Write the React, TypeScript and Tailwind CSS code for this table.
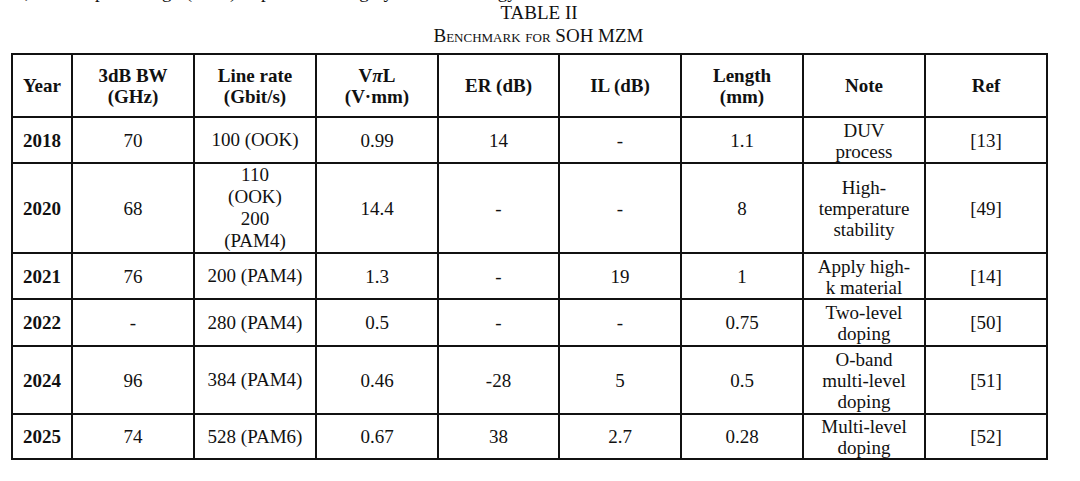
const rows = [
  { year: "2018", bw: "70", rate: ["100 (OOK)"], vpl: "0.99", er: "14", il: "-", len: "1.1", note: ["DUV", "process"], ref: "[13]", h: "h-[46px]" },
  { year: "2020", bw: "68", rate: ["110", "(OOK)", "200", "(PAM4)"], vpl: "14.4", er: "-", il: "-", len: "8", note: ["High-", "temperature", "stability"], ref: "[49]", h: "h-[90px]" },
  { year: "2021", bw: "76", rate: ["200 (PAM4)"], vpl: "1.3", er: "-", il: "19", len: "1", note: ["Apply high-", "k material"], ref: "[14]", h: "h-[46px]" },
  { year: "2022", bw: "-", rate: ["280 (PAM4)"], vpl: "0.5", er: "-", il: "-", len: "0.75", note: ["Two-level", "doping"], ref: "[50]", h: "h-[47px]" },
  { year: "2024", bw: "96", rate: ["384 (PAM4)"], vpl: "0.46", er: "-28", il: "5", len: "0.5", note: ["O-band", "multi-level", "doping"], ref: "[51]", h: "h-[68px]" },
  { year: "2025", bw: "74", rate: ["528 (PAM6)"], vpl: "0.67", er: "38", il: "2.7", len: "0.28", note: ["Multi-level", "doping"], ref: "[52]", h: "h-[45px]" },
];

function Lines({ items }: { items: string[] }) {
  return (
    <>
      {items.map((t, i) => (
        <div key={i}>{t}</div>
      ))}
    </>
  );
}

const serif = "font-['Liberation_Serif','Times_New_Roman',serif]";
const cell = `border-2 border-[#111] p-0 text-center align-middle text-[19px] leading-[21px] ${serif}`;

export default function App() {
  return (
    <div className={`flex flex-col w-[1080px] h-[481px] overflow-hidden bg-white text-[#111] text-[19px] ${serif}`}>
      {/* tail of the paragraph above, cut by the crop */}
      <p className="-mt-[13px] ml-[11px] h-[15px] leading-[10px] whitespace-nowrap overflow-hidden">
        rs, the compact design (SOH) improves the highly efficient energy.
      </p>
      <p className="text-center leading-[22px] ml-[-2px]">TABLE II</p>
      <p className="text-center leading-[24px] ml-[-3px] [font-variant:small-caps]">Benchmark for SOH MZM</p>

      <table className={`mt-[5px] ml-[11px] w-[1035px] table-fixed border-collapse text-[19px] text-[#111] ${serif}`}>
        <colgroup>
          <col className="w-[60px]" />
          <col className="w-[122px]" />
          <col className="w-[122px]" />
          <col className="w-[122px]" />
          <col className="w-[121px]" />
          <col className="w-[122px]" />
          <col className="w-[122px]" />
          <col className="w-[122px]" />
          <col className="w-[122px]" />
        </colgroup>
        <thead>
          <tr className="h-[63px]">
            <th className={`${cell} font-bold`}>Year</th>
            <th className={`${cell} font-bold`}>
              <div>3dB BW</div>
              <div>(GHz)</div>
            </th>
            <th className={`${cell} font-bold`}>
              <div>Line rate</div>
              <div>(Gbit/s)</div>
            </th>
            <th className={`${cell} font-bold`}>
              <div>
                V<span className="italic">π</span>L
              </div>
              <div>(V·mm)</div>
            </th>
            <th className={`${cell} font-bold`}>ER (dB)</th>
            <th className={`${cell} font-bold`}>IL (dB)</th>
            <th className={`${cell} font-bold`}>
              <div>Length</div>
              <div>(mm)</div>
            </th>
            <th className={`${cell} font-bold`}>Note</th>
            <th className={`${cell} font-bold`}>Ref</th>
          </tr>
        </thead>
        <tbody>
          {rows.map((r) => (
            <tr key={r.year} className={r.h}>
              <td className={`${cell} font-bold`}>{r.year}</td>
              <td className={cell}>{r.bw}</td>
              <td className={`${cell} leading-[22px]`}>
                <Lines items={r.rate} />
              </td>
              <td className={cell}>{r.vpl}</td>
              <td className={cell}>{r.er}</td>
              <td className={cell}>{r.il}</td>
              <td className={cell}>{r.len}</td>
              <td className={`${cell} pt-[1px]`}>
                <Lines items={r.note} />
              </td>
              <td className={cell}>{r.ref}</td>
            </tr>
          ))}
        </tbody>
      </table>
    </div>
  );
}
